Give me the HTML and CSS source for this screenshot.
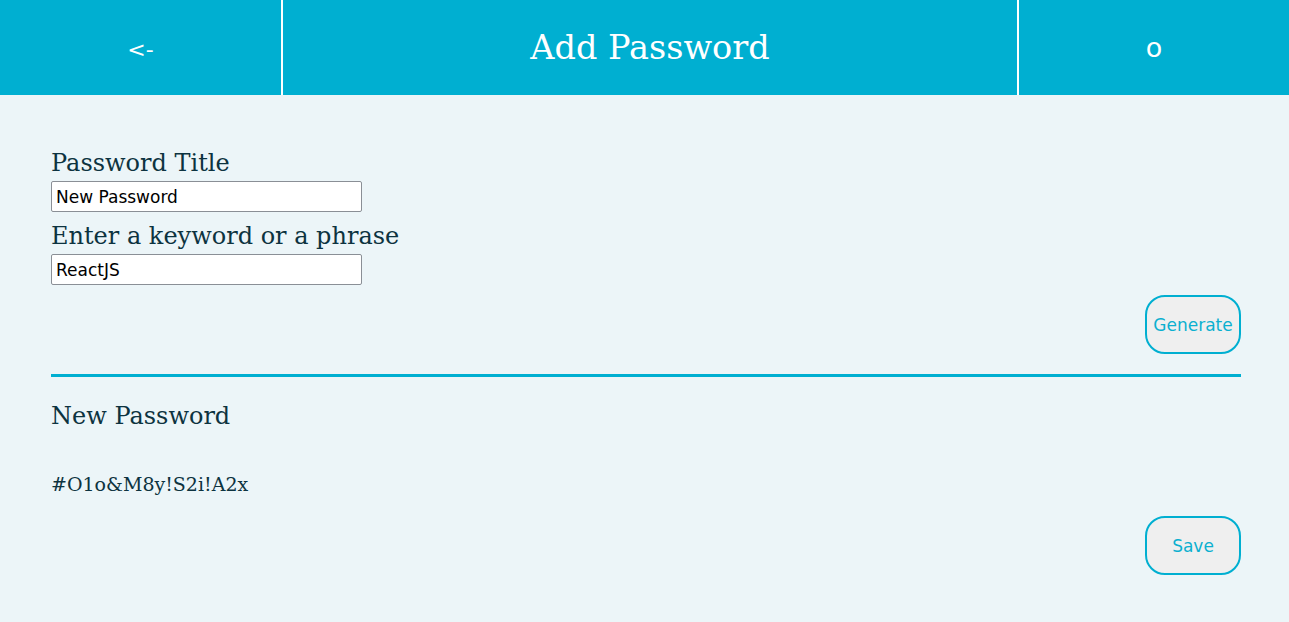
FILE: index.html
```html
<!DOCTYPE html>
<html>
<head>
<meta charset="utf-8">
<link rel="stylesheet" href="styles.css">
</head>
<body>
<header class="topbar">
  <div class="cell cell-side"><span class="nav">&lt;-</span></div>
  <div class="cell cell-main"><h1 class="title">Add Password</h1></div>
  <div class="cell cell-side cell-right"><span class="nav nav-o">o</span></div>
</header>
<main class="content">
  <section class="form">
    <label class="label" for="t">Password Title</label>
    <input class="field" id="t" type="text" value="New Password">
    <label class="label" for="k">Enter a keyword or a phrase</label>
    <input class="field" id="k" type="text" value="ReactJS">
    <div class="actions"><button class="btn">Generate</button></div>
  </section>
  <hr class="rule">
  <section class="result">
    <h2 class="heading">New Password</h2>
    <p class="pw">#O1o&amp;M8y!S2i!A2x</p>
    <div class="actions"><button class="btn">Save</button></div>
  </section>
</main>
</body>
</html>
```
FILE: styles.css
```css
html, body {
  margin: 0;
  padding: 0;
  background: #ecf5f8;
}
body {
  font-family: "DejaVu Serif", serif;
  color: #0d3340;
  height: 622px;
  overflow: hidden;
}
.topbar {
  display: flex;
  height: 95px;
  background: #00afd1;
}
.cell {
  display: flex;
  align-items: center;
  justify-content: center;
}
.cell-side {
  width: 281px;
  flex: none;
}
.cell-right {
  width: 270px;
}
.cell-main {
  flex: 1;
  border-left: 2px solid #ffffff;
  border-right: 2px solid #ffffff;
}
.nav {
  font-family: "DejaVu Sans", sans-serif;
  color: #ffffff;
  font-size: 22px;
  padding-top: 4px;
}
.nav-o {
  font-size: 27px;
  padding-top: 0;
}
.title {
  margin: 0;
  font-weight: normal;
  font-size: 33.5px;
  color: #ffffff;
}
.content {
  padding: 53px 48px 0 51px;
}
.form {
  display: flex;
  flex-direction: column;
  align-items: flex-start;
}
.label {
  font-size: 24px;
  line-height: 30px;
}
.field {
  box-sizing: border-box;
  width: 311px;
  height: 31px;
  margin: 3px 0 9px;
  padding: 2px 4px;
  border: 1px solid #8a8f96;
  border-radius: 2px;
  background: #ffffff;
  font-family: "DejaVu Sans", sans-serif;
  font-size: 17px;
  color: #000000;
}
.actions {
  align-self: stretch;
  display: flex;
  justify-content: flex-end;
}
.btn {
  box-sizing: border-box;
  width: 96px;
  height: 59px;
  border: 2px solid #00afd1;
  border-radius: 20px;
  background: #efefef;
  color: #0bb0d0;
  font-family: "DejaVu Sans", sans-serif;
  font-size: 17px;
  padding: 0;
}
.form .actions {
  margin-top: 1px;
}
.rule {
  margin: 20px 0 0;
  border: none;
  height: 3px;
  background: #00afd1;
}
.heading {
  margin: 24px 0 0;
  font-weight: normal;
  font-size: 24px;
  line-height: 30px;
}
.pw {
  margin: 41px 0 0;
  font-size: 19px;
  line-height: 24px;
}
.result .actions {
  margin-top: 20px;
}
```
